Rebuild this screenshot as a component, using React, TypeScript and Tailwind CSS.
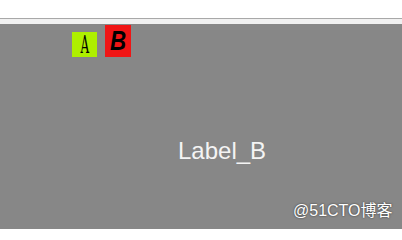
export default function App() {
  return (
    <div className="w-[402px] h-[229px] flex flex-col bg-white overflow-hidden font-['Liberation_Sans',Arial,sans-serif]">
      <div className="h-[18px] bg-white" />
      <div className="h-[1px] bg-[#a8a8a8]" />
      <div className="h-[5px] bg-[#f0f0f0]" />
      <div className="flex-1 bg-[#878787] flex flex-col">
        <div className="flex items-end gap-[8px] pl-[72px] pt-[1px]">
          <div className="w-[25px] h-[25px] bg-[#aeef00] flex items-center justify-center">
            <span className="inline-block scale-x-[0.55] text-[24px] leading-none text-black font-['DejaVu_Serif_Condensed','Liberation_Serif',serif]">
              A
            </span>
          </div>
          <div className="w-[26px] h-[32px] bg-[#f01515] flex items-center justify-center">
            <span className="inline-block scale-x-[0.8] text-[28px] leading-none font-bold italic text-black">
              B
            </span>
          </div>
        </div>
        <div className="pl-[178px] mt-[82px] text-[24px] leading-none text-[#f4f4f4]">Label_B</div>
        <div className="mt-auto mb-[10px] pl-[293px] text-[16px] leading-none text-white [text-shadow:0_0_2px_rgba(0,0,0,0.7)] font-['Liberation_Sans','Noto_Sans_CJK_SC',sans-serif]">
          @51CTO博客
        </div>
      </div>
    </div>
  );
}
